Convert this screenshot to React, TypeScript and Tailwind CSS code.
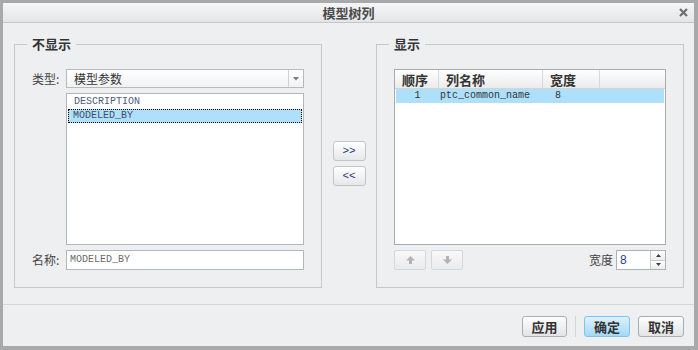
const cjk = "[font-family:'Noto_Sans_CJK_SC','Liberation_Sans',sans-serif]";
const mono = "[font-family:'Liberation_Mono',monospace]";

function UpArrow({ color }: { color: string }) {
  return (
    <svg width="9" height="8" viewBox="0 0 9 8">
      <path d="M4.5 0 L9 4.5 H6 V8 H3 V4.5 H0 Z" fill={color} />
    </svg>
  );
}

function DownArrow({ color }: { color: string }) {
  return (
    <svg width="9" height="8" viewBox="0 0 9 8">
      <path d="M4.5 8 L9 3.5 H6 V0 H3 V3.5 H0 Z" fill={color} />
    </svg>
  );
}

function NotShown() {
  return (
    <fieldset className="w-[308px] border border-[#c6c7c9] p-0 m-0">
      <legend className="ml-[12px] px-[5px] text-[13px] leading-[16px] font-bold text-[#333]">不显示</legend>
      <div className="pt-[17px] pb-[17px] pl-[17px] pr-[17px] flex flex-col gap-[5px]">
        <div className="flex items-center">
          <span className="w-[34px] text-[12px] leading-[19px] text-[#444]">类型:</span>
          <div className="flex-1 h-[19px] border border-[#b9babc] bg-gradient-to-b from-white to-[#f1f2f3] flex">
            <span className="flex-1 pl-[7px] text-[12px] leading-[17px] text-[#333]">模型参数</span>
            <div className="w-[15px] border-l border-[#d0d1d3] flex items-center justify-center">
              <svg width="6" height="4" viewBox="0 0 6 4">
                <path d="M0 0 H6 L3 3.5 Z" fill="#7c7c7c" />
              </svg>
            </div>
          </div>
        </div>
        <div className="flex">
          <div className="w-[34px]" />
          <div className={`flex-1 h-[152px] border border-[#b5b6b8] bg-white pt-px px-px ${mono}`}>
            <div className="h-[14px] pl-[5px] border border-transparent text-[10px] leading-[12px] text-[#4e5e7c]">DESCRIPTION</div>
            <div className="h-[14px] pl-[4px] border border-dotted border-black bg-[#aee0fb] text-[10px] leading-[12px] text-[#3d4d6a]">MODELED_BY</div>
          </div>
        </div>
        <div className="flex items-center">
          <span className="w-[34px] text-[12px] leading-[20px] text-[#444]">名称:</span>
          <div className={`flex-1 h-[20px] border border-[#b5b6b8] bg-white pl-[3px] text-[10px] leading-[18px] text-[#6a6a6a] ${mono}`}>MODELED_BY</div>
        </div>
      </div>
    </fieldset>
  );
}

function Shown() {
  return (
    <fieldset className="w-[308px] border border-[#c6c7c9] p-0 m-0">
      <legend className="ml-[12px] px-[5px] text-[13px] leading-[16px] font-bold text-[#333]">显示</legend>
      <div className="pt-[17px] pb-[17px] px-[17px] flex flex-col gap-[5px]">
        <div className="h-[176px] border border-[#a9aaac] bg-white">
          <div className="h-[19px] grid grid-cols-[44px_104px_57px_1fr] bg-gradient-to-b from-white to-[#ebebec] border-b border-[#d3d4d6] text-[13px] leading-[19px] font-bold text-[#333]">
            <div className="pl-[7px] border-r border-[#d9d9d9]">顺序</div>
            <div className="pl-[7px] border-r border-[#d9d9d9]">列名称</div>
            <div className="pl-[7px] border-r border-[#d9d9d9]">宽度</div>
            <div />
          </div>
          <div className={`mx-px h-[14px] grid grid-cols-[43px_104px_57px_1fr] bg-[#aee0fb] text-[10px] leading-[14px] text-[#333] ${mono}`}>
            <div className="text-center">1</div>
            <div className="pl-[1px]">ptc_common_name</div>
            <div className="pl-[12px]">8</div>
            <div />
          </div>
        </div>
        <div className="h-[20px] flex items-center">
          <div className="w-[32px] h-[20px] rounded-[2px] border border-[#d6d7d9] bg-gradient-to-b from-[#f8f8f8] to-[#ebebec] flex items-center justify-center">
            <UpArrow color="#b3b3b3" />
          </div>
          <div className="ml-[5px] w-[32px] h-[20px] rounded-[2px] border border-[#d6d7d9] bg-gradient-to-b from-[#f8f8f8] to-[#ebebec] flex items-center justify-center">
            <DownArrow color="#b3b3b3" />
          </div>
          <div className="flex-1" />
          <span className="text-[12px] leading-[20px] text-[#444] mr-[3px]">宽度</span>
          <div className="w-[50px] h-[20px] border border-[#b0b1b3] bg-white flex">
            <span className="flex-1 pl-[3px] text-[12px] leading-[18px] text-[#2b3f8a] [font-family:'Liberation_Sans',sans-serif]">8</span>
            <div className="w-[15px] border-l border-[#c9cacc] flex flex-col">
              <div className="flex-1 bg-gradient-to-b from-white to-[#ececec] border-b border-[#c9cacc] flex items-center justify-center">
                <svg width="5" height="3" viewBox="0 0 5 3">
                  <path d="M2.5 0 L5 3 H0 Z" fill="#3c3c3c" />
                </svg>
              </div>
              <div className="flex-1 bg-gradient-to-b from-white to-[#ececec] flex items-center justify-center">
                <svg width="5" height="3" viewBox="0 0 5 3">
                  <path d="M0 0 H5 L2.5 3 Z" fill="#3c3c3c" />
                </svg>
              </div>
            </div>
          </div>
        </div>
      </div>
    </fieldset>
  );
}

export default function App() {
  const moveBtn = `w-[33px] h-[20px] rounded-[3px] border border-[#c3c4c6] bg-gradient-to-b from-white to-[#e6e7e8] text-[11px] leading-[18px] text-[#23397a] text-center ${mono}`;
  const footBtn = "h-[21px] rounded-[3px] border border-[#acadaf] bg-gradient-to-b from-[#fdfdfd] to-[#e3e4e5] text-[13px] leading-[19px] font-bold text-[#333] text-center";

  return (
    <div className={`w-[698px] h-[350px] bg-[#eeeff1] border-l-[3px] border-t-[3px] border-r-4 border-b-4 border-[#a8a9ab] flex flex-col ${cjk}`}>
      <div className="h-[20px] border-b border-[#c6c7c9] bg-gradient-to-b from-[#f6f6f7] to-[#e4e5e7] grid grid-cols-[1fr_auto_1fr] items-center">
        <div />
        <span className="text-[13px] leading-[19px] font-bold text-[#4a4a4a]">模型树列</span>
        <div className="flex justify-end pr-[6px]">
          <svg width="9" height="9" viewBox="0 0 9 9">
            <path d="M1 1 L8 8 M8 1 L1 8" stroke="#6e6e6e" strokeWidth="2.2" />
          </svg>
        </div>
      </div>

      <div className="h-[281px] pt-[13px] pl-[11px] pr-[10px] flex items-start">
        <NotShown />
        <div className="w-[54px] pt-[105px] flex flex-col items-center gap-[5px]">
          <div className={moveBtn}>&gt;&gt;</div>
          <div className={moveBtn}>&lt;&lt;</div>
        </div>
        <Shown />
      </div>

      <div className="flex-1 border-t border-[#d5d6d8] pt-[11px] pr-[10px] flex justify-end items-start">
        <div className={`w-[45px] ${footBtn}`}>应用</div>
        <div className="mx-[8px] w-px h-[21px] bg-[#d3d4d6]" />
        <div className="w-[46px] h-[21px] rounded-[3px] border border-[#86c2e6] bg-gradient-to-b from-[#dcf1fd] to-[#a3d9f7] text-[13px] leading-[19px] font-bold text-[#333] text-center">确定</div>
        <div className={`ml-[8px] w-[46px] ${footBtn}`}>取消</div>
      </div>
    </div>
  );
}
